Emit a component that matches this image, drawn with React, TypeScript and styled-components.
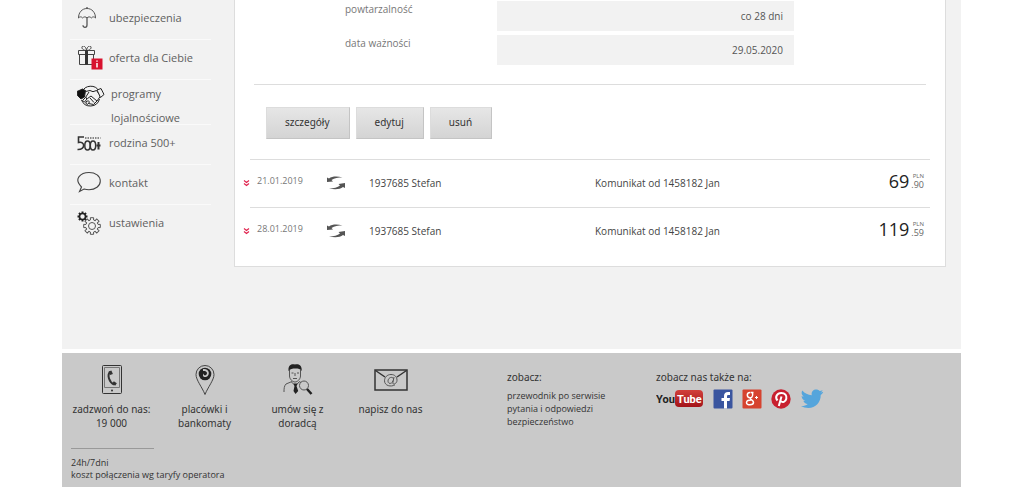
import React from "react";
import styled, { createGlobalStyle } from "styled-components";

const GlobalStyle = createGlobalStyle`
  * { box-sizing: border-box; }
  body {
    margin: 0;
    background: #fff;
    color: #444;
    font-family: "Open Sans", "Noto Sans", sans-serif;
    font-size: 10px;
  }
  a { color: inherit; text-decoration: none; }
  svg { display: block; }
`;

const Page = styled.div`
  padding: 0 62px;
`;

const Content = styled.div`
  display: flex;
  align-items: flex-start;
  min-height: 349px;
  padding-right: 15px;
  background: #f2f2f2;
`;

const Sidebar = styled.nav`
  flex: 0 0 172px;
  padding: 0 23px 0 8px;
`;

const Menu = styled.ul`
  margin: 0;
  padding: 0;
  list-style: none;
`;

const MenuItem = styled.li<{ $tall?: boolean }>`
  height: ${(p) => (p.$tall ? 45 : 40)}px;
  border-bottom: 1px solid #fafafa;
  &:last-child { border-bottom: 0; }
`;

const MenuLink = styled.a<{ $tall?: boolean }>`
  display: flex;
  align-items: flex-start;
  gap: ${(p) => (p.$tall ? 6 : 4)}px;
  padding: ${(p) => (p.$tall ? 2 : 6)}px 0 0 7px;
  color: #606060;
  font-size: 11px;
  line-height: 24px;
`;

const MenuIcon = styled.span`
  flex: 0 0 28px;
`;

const Card = styled.main`
  flex: 1;
  min-width: 0;
  padding: 1px 15px 10px 8px;
  background: #fff;
  border: 1px solid #ddd;
  border-top: 0;
`;

const Details = styled.dl`
  display: grid;
  grid-template-columns: 152px 297px;
  row-gap: 4px;
  margin: 0 4px 0 11px;
  padding: 0 0 19px 91px;
  border-bottom: 1px solid #ddd;
`;

const Term = styled.dt`
  color: #777;
  font-size: 10px;
  line-height: 16px;
`;

const Value = styled.dd`
  margin: 0;
  padding-right: 11px;
  background: #f2f2f2;
  color: #555;
  font-size: 10px;
  line-height: 30px;
  text-align: right;
`;

const Actions = styled.div`
  display: flex;
  gap: 6px;
  padding: 22px 0 20px 23px;
`;

const ActionButton = styled.button`
  height: 32px;
  padding: 0 19px 2px 18px;
  border: 1px solid #dcdcdc;
  border-right-color: #c4c4c4;
  border-bottom-color: #c4c4c4;
  background: linear-gradient(#e6e6e6, #d4d4d4);
  color: #333;
  font: 10px "Noto Sans", sans-serif;
`;

const Transactions = styled.table`
  width: 100%;
  border-collapse: collapse;
  table-layout: fixed;
`;

const Cell = styled.td`
  height: 48px;
  padding: 0 0 2px;
  border-top: 1px solid #ddd;
  color: #444;
  font-size: 10px;
`;

const ExpandCell = styled(Cell)`
  border-top: 0;
`;

const DateCell = styled(Cell)`
  padding: 0 0 6px 7px;
  color: #777;
  font-size: 9px;
`;

const AmountCell = styled(Cell)`
  padding: 0 6px 6px 0;
`;

const ExpandButton = styled.button`
  display: block;
  padding: 0;
  border: 0;
  background: none;
`;

const Amount = styled.div`
  display: flex;
  justify-content: flex-end;
  align-items: center;
  gap: 2px;
  color: #222;
  font-size: 18px;
  line-height: 24px;
`;

const Cents = styled.span`
  display: flex;
  flex-direction: column;
  align-items: flex-end;
  color: #666;
  font-size: 9px;
  line-height: 9px;
`;

const Currency = styled.span`
  font-size: 6px;
  line-height: 8px;
`;

const Footer = styled.footer`
  display: flex;
  align-items: flex-start;
  min-height: 134px;
  margin-top: 4px;
  background: #c9c9c9;
  color: #333;
`;

const ContactArea = styled.div`
  flex: 0 0 445px;
  padding: 11px 0 0 3px;
`;

const Contacts = styled.div`
  display: flex;
`;

const Contact = styled.a`
  display: flex;
  flex-direction: column;
  align-items: center;
  flex: 0 0 93px;
  gap: 6px;
  font-family: "Noto Sans", sans-serif;
  font-size: 10px;
  line-height: 14px;
  text-align: center;
`;

const Note = styled.p`
  width: 160px;
  margin: 18px 0 0 6px;
  font-size: 9px;
  line-height: 12px;
  white-space: nowrap;
  &::before {
    content: "";
    display: block;
    width: 83px;
    margin-bottom: 8px;
    border-top: 1px solid #999;
  }
`;

const FooterSection = styled.section`
  flex: 0 0 auto;
  min-width: 149px;
  padding-top: 16px;
`;

const FooterTitle = styled.h2`
  margin: 0;
  font-family: "Noto Sans", sans-serif;
  font-size: 10px;
  font-weight: 400;
  line-height: 16px;
`;

const LinkList = styled.div`
  display: flex;
  flex-direction: column;
  padding-top: 4px;
  font-size: 9px;
  line-height: 13px;
`;

const Socials = styled.div`
  display: flex;
  align-items: center;
  gap: 9px;
  padding-top: 4px;
`;

const Umbrella = () => (
  <svg width="28" height="24" viewBox="0 0 28 24" fill="none" stroke="#555" strokeWidth="1">
    <path d="M1.500 12C1.500 6.500 5 2.500 10 2.500S18.500 6.500 18.500 12c-1-1.500-3.200-1.500-4.200 0-1-1.500-3.300-1.500-4.300 0-1-1.500-3.300-1.500-4.300 0-1-1.500-3.200-1.500-4.200 0z" />
    <path d="M10 1v1.500M10 11.500V19c0 3-4 3-4 .3" strokeWidth="1.300" />
  </svg>
);

const Gift = () => (
  <svg width="28" height="26" viewBox="0 0 28 26" fill="none" stroke="#444">
    <path d="M1.500 4.500h16v4h-16zM2.500 8.500h14v10h-14z" />
    <path d="M9.500 4.500C7 4.500 4.500 3 5 1c.5-2 4-1 4.500 3.500C10 0 13.500-1 14 1c.5 2-2 3.500-4.500 3.500z" />
    <path d="M9.500 4v14.500" stroke="#333" strokeWidth="3" />
    <rect x="14.500" y="12.500" width="11" height="11" fill="#d8122f" stroke="none" />
    <path d="M20 17v4.500M20 14.500v1.300" stroke="#fff" strokeWidth="1.500" />
  </svg>
);

const Handshake = () => (
  <svg width="28" height="26" viewBox="0 -2 28 26" fill="none" stroke="#222" strokeLinejoin="round">
    <path d="M5 8a9.500 9.500 0 0 1 17-1M4.500 16a9.500 9.500 0 0 0 18-1" />
    <path d="M0 7.500L5.500 5l3 1.500L7.500 13 4 15l-3.500-3.500z" fill="#111" />
    <path d="M8.500 7.500l4.500-1 3 1.200 3.500-1.200L23.500 12l-3.500 5-6-5-3.500 2.500-2-1 3.500-5.500M9 17l2.500 2.500 5 1L20 17M13 14l4 4.500" />
    <path d="M5.500 16.500l3-3 1.500 1.500-2.500 3zM8.500 19l2.500-2.500 1.500 1.500-2 2.500z" fill="#f2f2f2" />
    <path d="M20 6l4-1.500 3 6-3.500 3z" fill="#f2f2f2" />
  </svg>
);

const Family500 = () => (
  <svg width="28" height="24" viewBox="0 -1 28 24" fill="none" stroke="#333">
    <path d="M7 5H1.500v5.500C8 8.500 9 18 .5 17.500" strokeWidth="1.600" />
    <ellipse cx="10.500" cy="13.500" rx="2.700" ry="4.500" strokeWidth="1.500" />
    <ellipse cx="16" cy="13.500" rx="2.700" ry="4.500" strokeWidth="1.500" />
    <path d="M21.500 10v7.500M19.500 13.500h4" strokeWidth="2" />
    <path d="M8 6h15.500" stroke="#888" strokeWidth="2" strokeDasharray="1.500 1" />
  </svg>
);

const Bubble = () => (
  <svg width="28" height="26" viewBox="0 0 28 26" fill="none" stroke="#444" strokeWidth="1.100">
    <path d="M4.500 16C-4 7.500 4 1.500 12 1.500c6.500 0 11.300 3.500 11.300 8.500s-5 8.800-11.300 8.800c-1.700 0-3.500-.3-5-.8l-4.500 2.500z" />
  </svg>
);

const teeth = [0, 45, 90, 135, 180, 225, 270, 315];

const Gears = () => (
  <svg width="28" height="26" viewBox="0 -1 28 26" fill="none" overflow="visible">
    {teeth.map((a) => (
      <path key={a} d="M5.500-.5v2" stroke="#222" strokeWidth="2" transform={`rotate(${a} 5.500 4.500)`} />
    ))}
    <circle cx="5.500" cy="4.500" r="3" stroke="#222" strokeWidth="1.600" />
    <g transform="translate(15 14)" stroke="#555">
      {teeth.map((a) => (
        <path key={a} d="M-2.500-5.600L-1.600-6v-2.300h3.200V-6l.9.400" transform={`rotate(${a})`} />
      ))}
      <circle r="3.500" />
    </g>
  </svg>
);

const Chevrons = () => (
  <svg width="7" height="8" viewBox="0 0 7 8" fill="none" stroke="#e0234e" strokeWidth="1.200">
    <path d="M1 1.500l2.500 2L6 1.500M1 4.500l2.500 2L6 4.500" />
  </svg>
);

const Repeat = () => (
  <svg width="18" height="14" viewBox="0 0 18 14" fill="#555">
    <path d="M0 6V1.500l2 1C5 .3 10 0 15.500 1.500 11 1.500 7.500 2 4.500 4L6 5.500z" />
    <path d="M18 7v5l-2-1c-3 2.300-8 3-14 1.300 5 0 8.500-.8 11-2.800L11.500 8z" />
  </svg>
);

const Phone = () => (
  <svg width="20" height="32" viewBox="0 0 20 32" fill="none" stroke="#333">
    <rect x=".5" y="1.500" width="19" height="28" rx="1" />
    <path d="M2.500 3.500h15v20h-15z" stroke="#777" />
    <path d="M8 8C5 11 7 18 12 20.500" strokeWidth="2" />
    <path d="M8 7l1.500 3.500M11 18.500l3 2" strokeWidth="3" />
    <circle cx="10" cy="26.500" r="1" fill="#333" stroke="none" />
  </svg>
);

const Pin = () => (
  <svg width="20" height="32" viewBox="0 0 20 32">
    <path d="M10 30.500C7 23 1 16 1 10.500a9 9 0 0 1 18 0C19 16 13 23 10 30.500z" fill="none" stroke="#444" />
    <circle cx="10" cy="10" r="6.300" fill="#222" />
    <path d="M8 5c6-1 8 6 3 8-3 .7-4-2.500-2-3.500-1 2 1.500 2.500 2.500 1C13 8.500 11 6.500 8 7z" fill="#c9c9c9" />
  </svg>
);

const Adviser = () => (
  <svg width="30" height="32" viewBox="0 0 30 32" fill="none" stroke="#555">
    <path d="M6.500 6v6c0 3 3 6 5.500 6s5.500-3 5.500-6V6" />
    <path d="M5.500 7C5 1 8.500-.5 12 .5c4-1 7.500 1.500 6.500 6.500-1-2-3-2.500-6-2.500S7 5 5.500 7z" fill="#222" stroke="none" />
    <path d="M8.500 9h2M14 9h2M12 9v3M10 14.500h4" />
    <path d="M9 17.500L3 20c-2 2-2 5-2 8M16 17.500l2 1M8.500 18l4 4 3.500-4" />
    <path d="M10.500 19.500h4L13.500 22l1.700 5-2.700 3-2-3 1-5z" fill="#222" stroke="none" />
    <circle cx="21" cy="21.500" r="4.500" />
    <path d="M24 25l4.500 5" stroke="#222" strokeWidth="2.500" />
  </svg>
);

const Mail = () => (
  <svg width="34" height="32" viewBox="0 0 34 32" fill="none" stroke="#333">
    <path d="M1 6h32v20H1z" strokeWidth="1.500" />
    <path d="M1.500 6.500L11 13M32.500 6.500L23 13" strokeWidth="1.500" />
    <path d="M20 13l-1.200 6c-.3 2 4.200 1 4.200-2.700 0-3.800-2.500-5.800-6-5.800-4 0-6.500 3-6.500 6.300 0 5 6.500 6.500 10.500 4M19.500 15.500c0-3.500-5.500-2.500-5.500 1.700 0 3.300 4.500 2.800 5-.7" stroke="#555" />
  </svg>
);

const YouTube = () => (
  <svg width="48" height="20" viewBox="0 0 48 20" fontFamily="Roboto, 'Liberation Sans', sans-serif" fontWeight="700">
    <defs>
      <linearGradient id="tube" x2="0" y2="1">
        <stop stopColor="#d2403c" />
        <stop offset="1" stopColor="#a31318" />
      </linearGradient>
    </defs>
    <rect x="19" y="1" width="28" height="17" rx="4" fill="url(#tube)" />
    <text x="0" y="14" fill="#222" fontSize="11">You</text>
    <text x="21" y="14" fill="#fff" fontSize="11">Tube</text>
  </svg>
);

const Facebook = () => (
  <svg width="20" height="20" viewBox="0 0 20 20">
    <rect x=".5" y=".5" width="19" height="19" rx="1" fill="#3a559f" />
    <path d="M11 19.500V12H8.500V9H11V7c0-2.700 1.500-4 4-4h2v3h-1.500c-1 0-1.500.4-1.500 1.500V9h3l-.4 3H14v7.500z" fill="#fff" />
  </svg>
);

const GooglePlus = () => (
  <svg width="20" height="20" viewBox="0 0 20 20" fill="none" stroke="#fff">
    <rect x=".5" y=".5" width="19" height="19" rx="1" fill="#d6432f" stroke="none" />
    <path d="M11.500 3.500H8.500M10.500 4C11.500 8 9 9 7.500 8.700 4.500 8 4.500 3.500 8 3.500M8.500 9c-1 1.500 3 2 3 4.300 0 3.500-7 3.200-7 .4C4.500 11.500 7 11 9 11" strokeWidth="1.500" />
    <path d="M13 8.500h3M14.500 7v3" />
  </svg>
);

const Pinterest = () => (
  <svg width="20" height="20" viewBox="0 0 20 20" fill="none">
    <circle cx="10" cy="10" r="9.700" fill="#c8202f" />
    <path d="M6.500 11.500C3.500 8 6 4 10.300 4c3.700 0 5.700 2.500 5 5.700-.7 3.300-4 4.300-5.500 2.300M10.500 7.500L7.800 17" stroke="#fff" strokeWidth="2" />
  </svg>
);

const Twitter = () => (
  <svg width="24" height="20" viewBox="0 0 24 20" fill="#55a5dc">
    <path d="M23 3.500c-.7 1.200-1.400 1.900-2.300 2.500C21 13 15.500 19 8.500 19 5.500 19 3 18.200 1 17c2.600.2 4.800-.5 6.700-2-2.200-.1-3.700-1.300-4.400-3.200h2C3 11 1.600 9.300 1.600 7c.7.4 1.300.5 2.100.6C1.600 6 1 3.600 2.300 1.500c2.500 2.900 5.500 4.500 9.500 4.800C11 2.500 13.500.5 16.300.5c1.300 0 2.500.5 3.400 1.500 1-.2 2-.6 2.900-1.100-.3 1-1 1.900-2 2.500.9-.1 1.700-.3 2.500-.6z" />
  </svg>
);

const menu = [
  { lines: ["ubezpieczenia"], icon: <Umbrella /> },
  { lines: ["oferta dla Ciebie"], icon: <Gift /> },
  { lines: ["programy", "lojalnościowe"], icon: <Handshake />, tall: true },
  { lines: ["rodzina 500+"], icon: <Family500 /> },
  { lines: ["kontakt"], icon: <Bubble /> },
  { lines: ["ustawienia"], icon: <Gears /> },
];

const contacts = [
  { lines: ["zadzwoń do nas:", "19 000"], icon: <Phone /> },
  { lines: ["placówki i", "bankomaty"], icon: <Pin /> },
  { lines: ["umów się z", "doradcą"], icon: <Adviser /> },
  { lines: ["napisz do nas"], icon: <Mail /> },
];

const transactions = [
  { date: "21.01.2019", whole: "69", cents: ".90" },
  { date: "28.01.2019", whole: "119", cents: ".59" },
];

const socials = [
  { name: "YouTube", icon: <YouTube /> },
  { name: "Facebook", icon: <Facebook /> },
  { name: "Google+", icon: <GooglePlus /> },
  { name: "Pinterest", icon: <Pinterest /> },
  { name: "Twitter", icon: <Twitter /> },
];

const Lines = ({ lines }: { lines: string[] }) => (
  <div>
    {lines.map((line) => (
      <div key={line}>{line}</div>
    ))}
  </div>
);

export default function App() {
  return (
    <Page>
      <GlobalStyle />
      <Content>
        <Sidebar>
          <Menu>
            {menu.map((m) => (
              <MenuItem key={m.lines[0]} $tall={m.tall}>
                <MenuLink href="#" $tall={m.tall}>
                  <MenuIcon>{m.icon}</MenuIcon>
                  <Lines lines={m.lines} />
                </MenuLink>
              </MenuItem>
            ))}
          </Menu>
        </Sidebar>
        <Card>
          <Details>
            <Term>powtarzalność</Term>
            <Value>co 28 dni</Value>
            <Term>data ważności</Term>
            <Value>29.05.2020</Value>
          </Details>
          <Actions>
            <ActionButton type="button">szczegóły</ActionButton>
            <ActionButton type="button">edytuj</ActionButton>
            <ActionButton type="button">usuń</ActionButton>
          </Actions>
          <Transactions>
            <colgroup>
              <col width="7" />
              <col width="77" />
              <col width="42" />
              <col width="226" />
              <col />
              <col width="90" />
            </colgroup>
            <tbody>
              {transactions.map((t) => (
                <tr key={t.date}>
                  <ExpandCell>
                    <ExpandButton type="button" aria-label="rozwiń">
                      <Chevrons />
                    </ExpandButton>
                  </ExpandCell>
                  <DateCell>{t.date}</DateCell>
                  <Cell><Repeat /></Cell>
                  <Cell>1937685 Stefan</Cell>
                  <Cell>Komunikat od 1458182 Jan</Cell>
                  <AmountCell>
                    <Amount>
                      <span>{t.whole}</span>
                      <Cents>
                        <Currency>PLN</Currency>
                        <span>{t.cents}</span>
                      </Cents>
                    </Amount>
                  </AmountCell>
                </tr>
              ))}
            </tbody>
          </Transactions>
        </Card>
      </Content>
      <Footer>
        <ContactArea>
          <Contacts>
            {contacts.map((c) => (
              <Contact key={c.lines[0]} href="#">
                {c.icon}
                <Lines lines={c.lines} />
              </Contact>
            ))}
          </Contacts>
          <Note>
            24h/7dni
            <br />
            koszt połączenia wg taryfy operatora
          </Note>
        </ContactArea>
        <FooterSection>
          <FooterTitle>zobacz:</FooterTitle>
          <LinkList>
            <a href="#">przewodnik po serwisie</a>
            <a href="#">pytania i odpowiedzi</a>
            <a href="#">bezpieczeństwo</a>
          </LinkList>
        </FooterSection>
        <FooterSection>
          <FooterTitle>zobacz nas także na:</FooterTitle>
          <Socials>
            {socials.map((s) => (
              <a key={s.name} href="#" aria-label={s.name}>
                {s.icon}
              </a>
            ))}
          </Socials>
        </FooterSection>
      </Footer>
    </Page>
  );
}
